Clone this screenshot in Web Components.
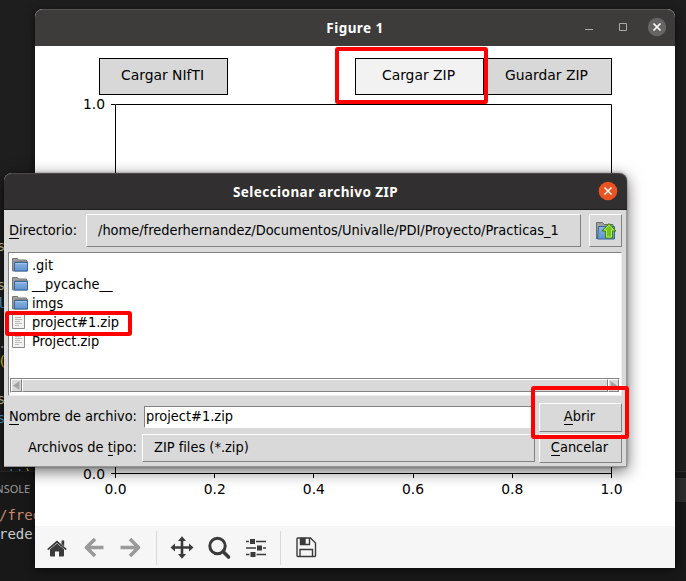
<!DOCTYPE html>
<html lang="es"><head><meta charset="utf-8"><title>Figure 1</title>
<style>html,body{margin:0;width:686px;height:581px;overflow:hidden;background:#1e1e1e}</style></head>
<body><desk-top></desk-top>
<script>
const define = (name, css, html) => customElements.define(name, class extends HTMLElement {
  constructor() {
    super();
    const t = document.createElement('template');
    t.innerHTML = `<style>*{box-sizing:border-box}${css}</style>${html}`;
    this.attachShadow({mode: 'open'}).append(t.content.cloneNode(true));
  }
});

define('code-token', `:host{position:absolute;white-space:pre;font:14px/20px "DejaVu Sans Mono",monospace}`, `<slot></slot>`);

define('editor-back', `
:host{position:absolute;inset:0;background:#1e1e1e;overflow:hidden}
.panel{position:absolute;left:0;right:0;top:471px;bottom:0;background:#181818;border-top:1px solid #2b2b2b}
.chip{position:absolute;right:0;top:6px;width:11px;height:24px;background:#2d2d2d}
.tab{position:absolute;left:-20px;top:9px;font:11px/16px "Noto Sans",sans-serif;color:#9d9d9d}`, `
<code-token style="left:-3px;top:236px;color:#dcdcaa">s</code-token>
<code-token style="left:-3px;top:275px;color:#dcdcaa">s</code-token>
<code-token style="left:-3px;top:293px;color:#569cd6">l</code-token>
<code-token style="left:-2px;top:333px;color:#a0a0a0">.</code-token>
<code-token style="left:-2px;top:351px;color:#ffd700">(</code-token>
<code-token style="left:-3px;top:389px;color:#dcdcaa">s</code-token>
<code-token style="left:-3px;top:408px;color:#4fa4dc">s</code-token>
<code-token style="left:7px;top:464px;color:#569cd6">''<span style="color:#ffd700">)</span></code-token>
<div class="panel"><div class="chip"></div><div class="tab">CONSOLE</div></div>
<code-token style="left:-1px;top:505px;color:#ce8a6a">/frede</code-token>
<code-token style="left:-1px;top:524px;color:#ccc">redern</code-token>`);

define('title-bar', `
:host{display:grid;grid-template-columns:1fr auto 1fr;align-items:center;height:37px;flex:none;border-radius:8px 8px 0 0;color:#fff;font:bold 13.5px/20px "Noto Sans",sans-serif;letter-spacing:.43px;background:var(--bar);box-shadow:inset 0 1px #ffffff20}
.t{grid-column:2;white-space:nowrap}.c{display:flex;justify-content:flex-end;align-items:center}`,
`<span class="t"><slot></slot></span><div class="c"><slot name="controls"></slot></div>`);

define('plot-button', `:host{display:flex;width:129px;height:37px;justify-content:center;align-items:center;padding:0 2px 3px 0;border:1px solid #000;background:var(--fill,#d8d8d8);box-sizing:border-box;font:13.89px/18px "DejaVu Sans",sans-serif;color:#000;white-space:nowrap}`, `<slot></slot>`);

const ticks = [0, .2, .4, .6, .8, 1].map(v => {
  const x = 80.5 + 496 * v;
  return `<path d="M${Math.round(x - .5) + .5} 427v5"/><text x="${x}" y="448" text-anchor="middle">${v.toFixed(1)}</text>`;
}).join('');
define('plot-axes', `:host{display:block;height:431px}svg{display:block;overflow:visible}text{font:13.89px "DejaVu Sans",sans-serif;fill:#000;stroke:none}`, `
<svg width="640" height="431" viewBox="0 49 640 431" fill="none" stroke="#000"><path d="M80.500 58.500h496v369h-496zM76 58.500h4M76 427.500h4"/>${ticks}<text x="70" y="63" text-anchor="end">1.0</text><text x="70" y="433" text-anchor="end">0.0</text></svg>`);

define('plot-toolbar', `
:host{display:flex;align-items:center;height:42px;background:#f6f6f6;padding:2px 0 0 10px}
svg{display:block;width:24px;height:24px;margin-right:13px;flex:none;overflow:visible}
i{width:1px;height:34px;background:#d9d9d9;margin:0 12px 0 0}`, `
<svg viewBox="0 0 24 24" fill="#3b3b3b"><path d="M5 13.200 12 7.400l7 5.800v6.300q0 1-1 1h-4v-5h-4v5H6q-1 0-1-1z"/><path d="m2.200 13 9.800-8.400L21.800 13l-1 1.200-8.800-7.300-8.800 7.300z"/><path d="M16.500 4.600h2.700v5.600l-2.700-2.300z"/></svg>
<svg viewBox="0 0 24 24" fill="none" stroke="#9a9a9a" stroke-width="3.600" stroke-linejoin="round"><path d="M21.500 11.500H5M13 3l-8.500 8.500L13 20"/></svg>
<svg viewBox="0 0 24 24" fill="none" stroke="#9a9a9a" stroke-width="3.600" stroke-linejoin="round"><path d="M1.500 11.500H18M11 3l8.500 8.500L11 20"/></svg>
<i></i>
<svg viewBox="0 0 24 24" fill="#3b3b3b" style="margin-left:1px"><path d="M12 .3 16 5h-2.700v5.200H19V7.500l4.500 4-4.500 4v-2.700h-5.700V18H16l-4 4.700L8 18h2.700v-5.200H5v2.700l-4.500-4 4.500-4v2.700h5.700V5H8z"/></svg>
<svg viewBox="0 0 24 24" fill="none" stroke="#3b3b3b"><circle cx="10.500" cy="10" r="7.700" stroke-width="3"/><path d="m16 15.500 5.500 5.500" stroke-width="3.600" stroke-linecap="round"/></svg>
<svg viewBox="0 0 24 24" fill="#3b3b3b"><path d="M2 4.700h20v1.600H2zM2 11.200h20v1.600H2zM2 17.700h20v1.600H2z"/><path d="M5.500 2.500h6v6h-6zM12.500 9h6v6h-6zM6 15.500h6v6H6z" stroke="#f6f6f6"/></svg>
<i style="margin:0 13px 0 -1px"></i>
<svg viewBox="0 0 24 24" fill="none" stroke="#3b3b3b" stroke-width="1.400"><path d="M4 2h12.500L21.500 7v12.500q0 1-1 1H4q-1 0-1-1V3q0-1 1-1zM6 20v-6.500h12.500V20M6.500 2v6.500h9V2"/><path d="M7 2.500h4V8H7z" fill="#3b3b3b"/></svg>`);

define('figure-window', `
:host{position:absolute;left:35px;top:9px;width:640px;height:559px;display:flex;flex-direction:column;border-radius:8px 8px 0 0;background:#fff;box-shadow:0 2px 10px #0009;--bar:#3d3c3a}
.row{display:flex;padding:12px 0 0 64px;height:49px}
.zip{--fill:#f2f2f2;margin-left:127px}.save{margin-left:-1px}
svg{display:block;width:110px;height:37px}`, `
<title-bar>Figure 1<svg slot="controls" viewBox="0 0 110 37" fill="none"><path d="M20 20.500h8" stroke="#aaa"/><path d="M54.500 14.500h7v7h-7z" stroke="#aaa"/><circle cx="92" cy="18" r="9.200" fill="#656565"/><path d="m88.500 14.500 7 7m0-7-7 7" stroke="#fff" stroke-width="1.700"/></svg></title-bar>
<div class="row"><plot-button>Cargar NIfTI</plot-button><plot-button class="zip">Cargar ZIP</plot-button><plot-button class="save">Guardar ZIP</plot-button></div>
<plot-axes></plot-axes><plot-toolbar></plot-toolbar>`);

define('raised-box', `:host{display:flex;align-items:center;box-sizing:border-box;border:solid;border-width:1px;border-color:#fff #828282 #828282 #fff;background:#d9d9d9;white-space:nowrap}`, `<slot></slot>`);

const folder = `<path d="M.5 14V1.500h5l1 1.500h8v3" fill="#a0a09c" stroke="#777"/><path d="M2.500 4.500h13v9.500h-15" fill="#8f9190" stroke="#858783"/><path d="M2.500 5.500h13v8.500h-13z" fill="url(#b)" stroke="#3465a4"/><path d="M3.500 6.500h11" stroke="#a9c5e5"/>`;
const blue = `<defs><linearGradient id="b" x2="0" y2="1"><stop stop-color="#8db4e0"/><stop offset="1" stop-color="#5e93cc"/></linearGradient></defs>`;
define('file-row', `
:host{display:flex;align-items:center;height:19px;gap:4px;padding-left:3px;white-space:pre}
svg{width:16px;height:16px;flex:none}.file,:host([kind=file]) .folder{display:none}:host([kind=file]) .file{display:block}`, `
<svg class="folder" viewBox="0 0 16 16">${blue}${folder}</svg>
<svg class="file" viewBox="0 0 16 16"><path d="M.5.500h12v14H.5z" fill="#f2f2f0" stroke="#8b8b88"/><path d="M3 3.500h6M3 5.500h7M3 7.500h5M3 9.500h7M3 11.500h4" stroke="#bcbcba"/></svg><slot></slot>`);

define('scroll-strip', `
:host{display:flex;height:15px;border:1px solid;border-color:#828282 #fff #fff #828282;background:#c3c3c3;margin:0 1px 2px}
raised-box{height:13px}.a{width:11px;justify-content:center}.thumb{flex:1}svg{width:7px;height:9px}`, `
<raised-box class="a"><svg viewBox="0 0 7 9"><path d="M6.500 0v9L0 4.500z" fill="#a3a3a3"/></svg></raised-box><raised-box class="thumb"></raised-box><raised-box class="a"><svg viewBox="0 0 7 9"><path d="M.5 0v9L7 4.500z" fill="#a3a3a3"/></svg></raised-box>`);

define('file-dialog', `
:host{position:absolute;left:4px;top:173px;width:623px;height:294px;display:flex;flex-direction:column;border-radius:8px 8px 0 0;background:#d9d9d9;--bar:#312f2f;box-shadow:0 4px 16px #0009,0 0 3px #0006;border:solid #969696;border-width:0 1px 1px 0;font:14.45px/18px "DejaVu Sans Condensed","DejaVu Sans",sans-serif;font-stretch:condensed;color:#000}
title-bar{margin-right:-1px;border-bottom:1px solid #1c1c1c}
u{text-decoration:none;box-shadow:0 1px #000}
.dir{display:flex;align-items:center;padding:4px 4px 0 5px;height:37px;white-space:nowrap}
.dir>span{width:77px;padding-bottom:2px}.path{width:495px;height:33px;padding:0 0 1px 11px}.up{width:33px;height:33px;margin-left:8px;justify-content:center}
.up svg{width:22px;height:22px}
.list{margin:5px 4px 0;height:144px;background:#fff;border:1px solid;border-color:#828282 #eee #eee #828282;padding-top:2px;display:flex;flex-direction:column}
scroll-strip{margin-top:auto}
.form{display:grid;grid-template-columns:134px 397px 83px;grid-template-rows:28px 28px;row-gap:3px;padding:7px 0 0 4px;align-items:center}
.form>span{text-align:right;padding:0 1px 2px 0;margin-left:-6px;white-space:nowrap}
.in{height:22px;margin:0 4px 0 2px;padding-left:1px;background:#fff;border:1px solid;border-color:#828282 #fff #fff #828282;line-height:19px}
.sel{height:28px;margin-right:4px;padding:0 0 2px 11px}.b{height:29px;justify-content:center;padding:0 2px 2px 0}
.x{width:40px;height:37px}`, `
<title-bar>Seleccionar archivo ZIP<svg class="x" slot="controls" viewBox="0 0 40 37"><circle cx="21" cy="18" r="9.300" fill="#e95420"/><path d="m17.500 14.500 7 7m0-7-7 7" stroke="#fff" stroke-width="1.500"/></svg></title-bar>
<div class="dir"><span><u>D</u>irectorio:</span><raised-box class="path">/home/frederhernandez/Documentos/Univalle/PDI/Proyecto/Practicas_1</raised-box>
<raised-box class="up"><svg viewBox="0 0 22 22">${blue}<path d="M1.500 19V2.500h6l1.500 2h9V8" fill="#a0a09c" stroke="#6c6e6b"/><path d="M3.500 6.500h16v12.500h-17z" fill="url(#b)" stroke="#3465a4"/><path d="m14 3.500 7 7.500h-3.500v7h-7v-7H7z" fill="#73c615" stroke="#3e8505"/><path d="m14 5.200 4.700 4.800h-2.200v7h-5v-7H9.300z" fill="none" stroke="#b5e66b"/></svg></raised-box></div>
<div class="list"><file-row>.git</file-row><file-row>__pycache__</file-row><file-row>imgs</file-row><file-row kind="file">project#1.zip</file-row><file-row kind="file">Project.zip</file-row><scroll-strip></scroll-strip></div>
<div class="form"><span style="padding-right:5px"><u>N</u>ombre de archivo:</span><div class="in">project#1.zip</div><raised-box class="b"><span><u>A</u>brir</span></raised-box>
<span style="padding-right:5px"><i style="font-style:normal">Archivos de <u>t</u>ipo:</i></span><raised-box class="sel">ZIP files (*.zip)</raised-box><raised-box class="b"><span><u>C</u>ancelar</span></raised-box></div>`);

define('red-mark', `:host{position:absolute;box-sizing:border-box;border:4px solid #f00;border-radius:3px}`, ``);

define('desk-top', `:host{display:block;position:relative;width:686px;height:581px;overflow:hidden}`, `
<editor-back></editor-back><figure-window></figure-window><file-dialog></file-dialog>
<red-mark style="left:335px;top:47px;width:153px;height:57px"></red-mark>
<red-mark style="left:5px;top:311px;width:127px;height:25px"></red-mark>
<red-mark style="left:531px;top:386px;width:98px;height:53px"></red-mark>`);
</script></body></html>
